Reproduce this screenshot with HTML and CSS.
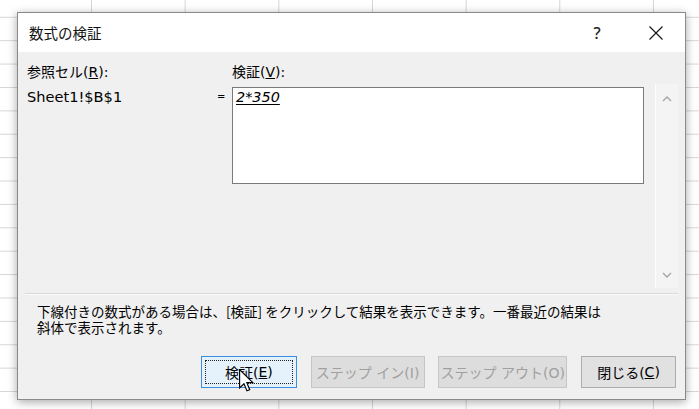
FILE: index.html
```html
<!DOCTYPE html>
<html lang="ja">
<head>
<meta charset="utf-8">
<title>数式の検証</title>
<link rel="stylesheet" href="styles.css">
</head>
<body>
<div class="dialog">
  <div class="titlebar">
    <span class="title">数式の検証</span>
    <span class="tb-help">?</span>
    <span class="tb-close">
      <svg width="14" height="14" viewBox="0 0 14 14"><path d="M0.5 0.5 L13.5 13.5 M13.5 0.5 L0.5 13.5" stroke="#111" stroke-width="1.1" fill="none"/></svg>
    </span>
  </div>
  <div class="content">
    <div class="eval">
      <div class="lbl lbl-ref">参照セル(<u>R</u>):</div>
      <div class="lbl lbl-eval">検証(<u>V</u>):</div>
      <div class="ref">Sheet1!$B$1</div>
      <div class="eq">=</div>
      <div class="box"><span class="expr">2*350</span></div>
      <div class="scroll">
        <svg width="10" height="6" viewBox="0 0 10 6"><path d="M1 5 L5 1 L9 5" stroke="#a6a6a6" stroke-width="1.4" fill="none"/></svg>
        <svg width="10" height="6" viewBox="0 0 10 6"><path d="M1 1 L5 5 L9 1" stroke="#a6a6a6" stroke-width="1.4" fill="none"/></svg>
      </div>
    </div>
    <div class="sep"></div>
    <div class="hint">
      <div class="hint-line">下線付きの数式がある場合は、[検証] をクリックして結果を表示できます。一番最近の結果は</div>
      <div class="hint-line">斜体で表示されます。</div>
    </div>
    <div class="buttons">
      <button class="btn btn-default btn-w1"><span class="focus">検証(<u>E</u>)</span></button>
      <button class="btn btn-disabled btn-w2">ステップ イン(I)</button>
      <button class="btn btn-disabled btn-w3">ステップ アウト(O)</button>
      <button class="btn btn-w4">閉じる(<u>C</u>)</button>
    </div>
  </div>
</div>
<svg class="cursor" width="15" height="23" viewBox="0 0 13 20">
  <path d="M0.5 0.5 V16.5 L4.3 12.8 L6.9 19 L9.3 18 L6.8 11.9 H12 Z" fill="#fff" stroke="#000" stroke-width="1" stroke-linejoin="miter"/>
</svg>
</body>
</html>
```
FILE: styles.css
```css
* { box-sizing: border-box; }

html, body {
  margin: 0;
  padding: 0;
}

body {
  width: 699px;
  height: 409px;
  overflow: hidden;
  position: relative;
  background-color: #ffffff;
  background-image:
    linear-gradient(to right, #d6d6d6 1px, transparent 1px),
    linear-gradient(to bottom, #d6d6d6 1px, transparent 1px);
  background-size: 93.67px 100%, 100% 23.4px;
  background-position: 91px 0, 0 16.8px;
  font-family: "DejaVu Sans", "Noto Sans CJK JP", sans-serif;
  font-size: 14px;
  color: #000;
  padding-top: 12px;
  padding-left: 17px;
}

.dialog {
  width: 669px;
  height: 388px;
  border: 1px solid #8a8a8a;
  background: #f0f0f0;
  box-shadow: 0 2px 9px rgba(0, 0, 0, 0.35);
  display: flex;
  flex-direction: column;
}

.titlebar {
  height: 39px;
  flex: none;
  background: #ffffff;
  display: flex;
  align-items: center;
  padding-left: 11px;
}

.title {
  flex: 1;
  font-family: "Noto Sans CJK JP", sans-serif;
  font-size: 14.5px;
  color: #111;
}

.tb-help {
  width: 40px;
  text-align: center;
  font-family: "Noto Sans", sans-serif;
  font-size: 16px;
  font-weight: 500;
  color: #222;
  margin-right: 16px;
}

.tb-close {
  width: 46px;
  margin-right: 6px;
  display: flex;
  justify-content: center;
  align-items: center;
}

.tb-close svg { display: block; }

.content {
  flex: 1;
  display: flex;
  flex-direction: column;
  padding: 10px 7px 11px 9px;
}

.eval {
  display: grid;
  grid-template-columns: 186px 19px 412px 11px 23px;
  grid-template-rows: 20px 201px;
  row-gap: 5px;
}

.lbl {
  line-height: 20px;
  white-space: nowrap;
}

.lbl-ref { grid-column: 1; grid-row: 1; }
.lbl-eval { grid-column: 3; grid-row: 1; }

.ref {
  grid-column: 1;
  grid-row: 2;
  line-height: 20px;
  font-size: 14.6px;
  align-self: start;
}

.eq {
  grid-column: 2;
  grid-row: 2;
  align-self: start;
  line-height: 20px;
  font-size: 10px;
  padding-left: 4px;
}

.box {
  grid-column: 3;
  grid-row: 2;
  align-self: start;
  height: 97px;
  background: #ffffff;
  border: 1px solid #7a7a7a;
  padding: 0 3px;
  line-height: 19px;
}

.expr {
  font-style: italic;
  font-size: 14.4px;
  text-decoration: underline;
  text-underline-offset: 2px;
}

.scroll {
  grid-column: 5;
  grid-row: 2;
  margin-top: -3px;
  background: #f4f4f4;
  box-shadow: inset 1px 0 0 #fdfdfd;
  display: flex;
  flex-direction: column;
  justify-content: space-between;
  align-items: center;
  padding: 12px 0 10px;
}

.scroll svg { display: block; }

.sep {
  height: 1px;
  margin-top: 5px;
  margin-left: -2px;
  background: #d9d9d9;
  box-shadow: 0 1px 0 #fafafa;
}

.hint {
  margin: 10px 0 0 10px;
  font-family: "Noto Sans CJK JP", sans-serif;
  font-size: 13.5px;
}

.hint-line {
  height: 15.5px;
  line-height: 15.5px;
  white-space: nowrap;
}

.buttons {
  margin-top: auto;
  display: flex;
  justify-content: flex-end;
  gap: 13.7px;
  padding-right: 2px;
}

.btn {
  height: 32px;
  border: 1px solid #adadad;
  background: #e1e1e1;
  font-family: "DejaVu Sans", "Noto Sans CJK JP", sans-serif;
  font-size: 14px;
  color: #000;
  padding: 0;
  display: flex;
  align-items: center;
  justify-content: center;
}

.btn-w1 { width: 96px; }
.btn-w2 { width: 114px; }
.btn-w3 { width: 129px; }
.btn-w4 { width: 95px; }

.btn-default {
  border-color: #3d8ee0;
  background: #e5f1fb;
  padding: 3px;
}

.focus {
  flex: 1;
  align-self: stretch;
  display: flex;
  align-items: center;
  justify-content: center;
  border: 1px dotted #222;
}

.btn-disabled {
  background: #dddddd;
  border-color: #c6c6c6;
  color: #a0a0a0;
}

.cursor {
  position: absolute;
  left: 239px;
  top: 369px;
}
```
